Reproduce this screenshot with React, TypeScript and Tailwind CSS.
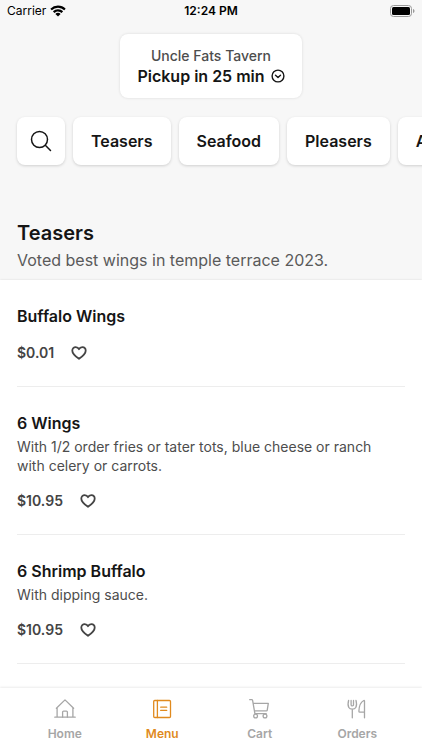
import type { ReactNode } from "react";
import clsx from "clsx";

type MenuItem = {
  name: string;
  description?: string;
  price: string;
};

const categories = ["Teasers", "Seafood", "Pleasers", "Appetizers"];

const items: MenuItem[] = [
  { name: "Buffalo Wings", price: "$0.01" },
  {
    name: "6 Wings",
    description:
      "With 1/2 order fries or tater tots, blue cheese or ranch with celery or carrots.",
    price: "$10.95",
  },
  {
    name: "6 Shrimp Buffalo",
    description: "With dipping sauce.",
    price: "$10.95",
  },
];

function WifiIcon() {
  return (
    <svg width="16" height="12" viewBox="0 0 16 12" fill="currentColor" aria-hidden="true">
      <path d="M8 0.6c3 0 5.700 1.200 7.700 3.100l-1.500 1.600A9 9 0 0 0 8 2.800a9 9 0 0 0-6.200 2.500L.3 3.700A11.100 11.100 0 0 1 8 .6Z" />
      <path d="M8 4.200c2 0 3.800.8 5.100 2.100l-1.500 1.600A5.200 5.200 0 0 0 8 6.400c-1.400 0-2.700.6-3.600 1.500L2.900 6.300A7.300 7.300 0 0 1 8 4.200Z" />
      <path d="M8 7.800c1 0 1.900.4 2.600 1.100L8 11.600 5.400 8.900C6.100 8.200 7 7.800 8 7.800Z" />
    </svg>
  );
}

function BatteryIcon() {
  return (
    <svg width="25" height="12" viewBox="0 0 25 12" aria-hidden="true">
      <rect x="0.5" y="0.5" width="21" height="11" rx="3" fill="none" stroke="#9a9a9a" />
      <rect x="2" y="2" width="18" height="8" rx="1.500" fill="#000" />
      <path d="M23 4v4c.9-.3 1.500-1.100 1.500-2S23.900 4.300 23 4Z" fill="#9a9a9a" />
    </svg>
  );
}

function ChevronCircleIcon() {
  return (
    <svg
      width="14"
      height="14"
      viewBox="0 0 14 14"
      fill="none"
      stroke="currentColor"
      strokeWidth="1.400"
      strokeLinecap="round"
      strokeLinejoin="round"
      aria-hidden="true"
    >
      <circle cx="7" cy="7" r="5.900" />
      <path d="M4.500 6.200 7 8.500l2.500-2.300" />
    </svg>
  );
}

function SearchIcon() {
  return (
    <svg
      width="22"
      height="22"
      viewBox="0 0 22 22"
      fill="none"
      stroke="currentColor"
      strokeWidth="1.500"
      strokeLinecap="round"
      aria-hidden="true"
    >
      <circle cx="9.500" cy="9.500" r="8" />
      <path d="m15.300 15.300 5.200 5.200" />
    </svg>
  );
}

function HeartIcon() {
  return (
    <svg
      width="16"
      height="14"
      viewBox="0 0 16 14"
      fill="none"
      stroke="currentColor"
      strokeWidth="1.800"
      strokeLinejoin="round"
      aria-hidden="true"
    >
      <path d="M8 12.800C4.200 10.200 1.300 7.700 1.300 4.700c0-2.100 1.500-3.600 3.400-3.600C6.200 1.100 7.400 1.900 8 3.200c.6-1.300 1.800-2.100 3.300-2.100 1.900 0 3.400 1.500 3.400 3.600 0 3-2.900 5.500-6.700 8.100Z" />
    </svg>
  );
}

function NavIcon({ children }: { children: ReactNode }) {
  return (
    <svg
      width="22"
      height="20"
      viewBox="0 0 22 20"
      fill="none"
      stroke="currentColor"
      strokeWidth="1.300"
      strokeLinecap="round"
      strokeLinejoin="round"
      aria-hidden="true"
    >
      {children}
    </svg>
  );
}

const tabs = [
  {
    label: "Home",
    icon: (
      <NavIcon>
        <path d="M.8 18.200h20.400M3.100 18.200V8.600M18.900 18.200V8.600M2.400 9.200 11 .9l8.600 8.300" />
        <path d="M8.600 18.200v-5.100q0-1 1-1h2.800q1 0 1 1v5.100" />
      </NavIcon>
    ),
  },
  {
    label: "Menu",
    active: true,
    icon: (
      <NavIcon>
        <rect x="2.700" y="1.500" width="16.800" height="17" rx="1" />
        <path d="M6.400 1.500v17M9.700 8.200h6M9.700 11.400h6" />
      </NavIcon>
    ),
  },
  {
    label: "Cart",
    icon: (
      <NavIcon>
        <path d="M.7.7h2q.7 0 .9.700l2.300 13.300M4.100 4.300h15.200l-1.100 7q-.1.600-.7.600H5.400M5.900 14.700h11.300" />
        <circle cx="6.600" cy="17" r="1.900" />
        <circle cx="16" cy="17" r="1.900" />
      </NavIcon>
    ),
  },
  {
    label: "Orders",
    icon: (
      <NavIcon>
        <path d="M2.600 1.500c-.8 2.900-.6 5.600.2 7 .7 1.200 1.900 1.700 3.500 1.700s2.800-.5 3.500-1.700c.8-1.400 1-4.100.2-7M5.100 1.500v4.200q0 1.200 1.200 1.200t1.200-1.200V1.500M6.300 10.200v8.600" />
        <path d="M18.500 18.800V1.900q0-.7-.7-.4c-3 1.500-4.800 5.700-4.900 10.800q0 .9.900.9h4.700" />
      </NavIcon>
    ),
  },
];

function StatusBar() {
  return (
    <div className="grid grid-cols-3 items-center h-[22px] px-[7px] text-xs text-black">
      <div className="flex items-center gap-1">
        <span>Carrier</span>
        <WifiIcon />
      </div>
      <span className="text-center font-semibold">12:24 PM</span>
      <div className="flex justify-end">
        <BatteryIcon />
      </div>
    </div>
  );
}

function MenuRow({ item }: { item: MenuItem }) {
  return (
    <li className="pt-[26px] pb-6 border-b border-[#ededed]">
      <h3 className="text-base leading-5 font-semibold text-[#151515]">
        {item.name}
      </h3>
      {item.description && (
        <p className="mt-1 -mb-px pr-6 text-sm leading-[19px] text-[#4d4d4d]">
          {item.description}
        </p>
      )}
      <div className="flex items-center gap-[17px] mt-[18px] h-[18px] text-[#444444]">
        <span className="text-sm leading-[18px] font-semibold">{item.price}</span>
        <button type="button" aria-label={`Favorite ${item.name}`}>
          <HeartIcon />
        </button>
      </div>
    </li>
  );
}

export default function App() {
  return (
    <div className="flex flex-col h-screen overflow-hidden bg-[#f7f7f7] font-['Inter',sans-serif]">
      <StatusBar />

      {/* Pickup location */}
      <div className="flex justify-center mt-3">
        <button
          type="button"
          className="flex flex-col items-center px-[17px] py-3 rounded-lg bg-white shadow-[0_0_3px_rgba(0,0,0,0.12)]"
        >
          <span className="text-sm leading-5 font-medium text-[#4d4d4d]">
            Uncle Fats Tavern
          </span>
          <span className="flex items-center gap-[6px] text-base leading-5 font-semibold text-[#151515]">
            Pickup in 25 min
            <ChevronCircleIcon />
          </span>
        </button>
      </div>

      {/* Categories */}
      <div className="flex shrink-0 gap-2 px-[17px] pt-[19px] pb-2 overflow-hidden text-[#151515]">
        <button
          type="button"
          aria-label="Search"
          className="flex shrink-0 items-center justify-center size-12 rounded-lg bg-white shadow-[0_1px_3px_rgba(0,0,0,0.16)]"
        >
          <SearchIcon />
        </button>
        {categories.map((category) => (
          <button
            key={category}
            type="button"
            className="shrink-0 h-12 px-[18px] rounded-lg bg-white text-base font-semibold shadow-[0_1px_3px_rgba(0,0,0,0.16)]"
          >
            {category}
          </button>
        ))}
      </div>

      <main className="flex-1 min-h-0 overflow-hidden">
        <div className="px-[17px] pt-[46px] pb-[7px]">
          <h2 className="text-xl leading-7 font-semibold text-[#151515]">Teasers</h2>
          <p className="text-base leading-[26px] text-[#5a5a5a]">
            Voted best wings in temple terrace 2023.
          </p>
        </div>
        <ul className="min-h-full px-[17px] bg-white shadow-[0_0_2px_rgba(0,0,0,0.12)]">
          {items.map((item) => (
            <MenuRow key={item.name} item={item} />
          ))}
        </ul>
      </main>

      <nav className="relative grid grid-cols-4 shrink-0 h-[62px] px-4 bg-white shadow-[0_-1px_2px_rgba(0,0,0,0.08)]">
        {tabs.map((tab) => (
          <a
            key={tab.label}
            href="#"
            className={clsx(
              "flex flex-col items-center gap-[7px] pt-[11px] text-xs font-semibold",
              tab.active ? "text-[#e08a1e]" : "text-[#a6a6a6]"
            )}
          >
            {tab.icon}
            {tab.label}
          </a>
        ))}
      </nav>
    </div>
  );
}
